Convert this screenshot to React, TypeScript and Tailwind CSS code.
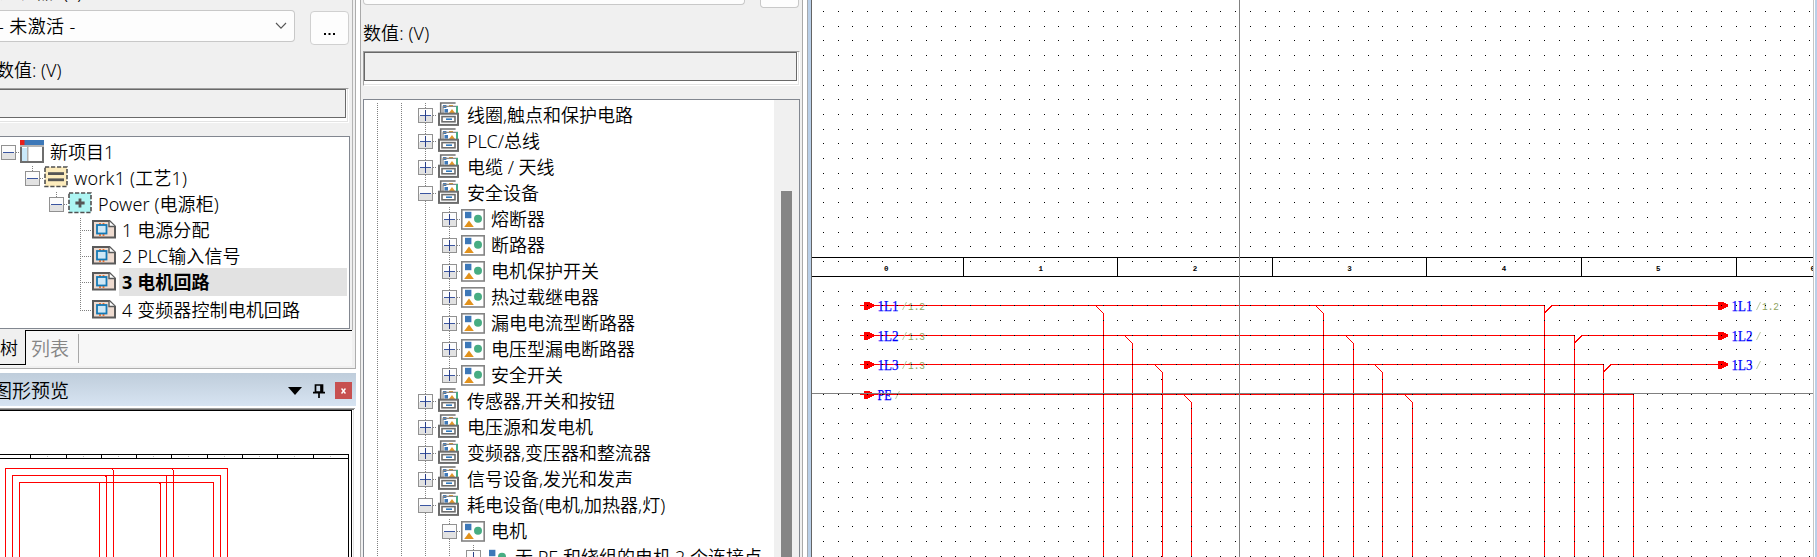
import React from "react";

const UI = "font-['Noto_Sans','Noto_Sans_CJK_SC',sans-serif]";

/* One 24px indentation cell of a tree: dotted guide lines and an optional expander */
type CellProps = { v?: "full" | "top" | "bottom" | "none"; h?: boolean; box?: "+" | "-"; height?: number };
function Cell({ v = "none", h = false, box, height = 26 }: CellProps) {
  const y1 = v === "bottom" ? 12 : 0;
  const y2 = v === "top" ? 12 : height;
  return (
    <svg width="24" height={height} className="block shrink-0 overflow-visible" shapeRendering="crispEdges">
      {v !== "none" && <path d={`M13.5 ${y1}V${y2}`} stroke="#808080" strokeDasharray="1 1" />}
      {h && <path d="M13 12.5H25" stroke="#808080" strokeDasharray="1 1" />}
      {box && (
        <g>
          <rect x="6" y="5" width="15" height="15" fill="#919191" />
          <rect x="7" y="6" width="13" height="13" fill="#fcfcfc" />
          <rect x="7" y="13" width="13" height="6" fill="#e2e2e2" />
          <path d="M8 12.5H19" stroke="#3a55a0" />
          {box === "+" && <path d="M13.5 7V18" stroke="#2a3f88" />}
        </g>
      )}
    </svg>
  );
}

function ProjectIcon() {
  return (
    <svg width="24" height="24" className="block shrink-0">
      <rect x="1" y="1" width="22" height="21" fill="#fff" stroke="#6e6e6e" strokeWidth="2" />
      <rect x="0" y="0" width="24" height="5" fill="#3d78b8" />
      <rect x="0" y="5" width="24" height="2" fill="#b5b5b5" />
      <rect x="2" y="8" width="5" height="13" fill="#c9e8fa" />
      <rect x="7" y="7" width="1.5" height="14" fill="#b0b0b0" />
      <rect x="0" y="0" width="4.5" height="5" fill="#e8201c" />
    </svg>
  );
}

function DashedIcon({ kind }: { kind: "function" | "location" }) {
  return (
    <svg width="24" height="22" className="block shrink-0">
      <rect x="1" y="1" width="22" height="19.5" fill={kind === "function" ? "#fdecbd" : "#adf5f3"} />
      <rect x="1" y="1" width="22" height="19.5" fill="none" stroke="#505050" strokeWidth="1.6" strokeDasharray="4.2 1.8" />
      {kind === "function" ? (
        <g fill="#555">
          <rect x="4" y="6.2" width="16" height="2.8" />
          <rect x="4" y="12.4" width="16" height="2.8" />
        </g>
      ) : (
        <path d="M12 6.4V15.6M7.4 11H16.6" stroke="#555" strokeWidth="2.8" />
      )}
    </svg>
  );
}

function PageIcon() {
  return (
    <svg width="24" height="19" className="block shrink-0">
      <path d="M1 1H17.5L23 6.5V17.5H1Z" fill="#eedbd0" stroke="#5a5a5a" strokeWidth="2" />
      <path d="M17 1V6.5H23" fill="#fff" stroke="#5a5a5a" strokeWidth="1.4" />
      <path d="M8 3V5M11.5 3V5M8 13.5V16M11.5 13.5V16" stroke="#f07028" strokeWidth="1.8" />
      <rect x="5" y="5" width="9.5" height="8.5" fill="#cfe8f6" stroke="#1479b5" strokeWidth="1.8" />
    </svg>
  );
}

function DrawerIcon() {
  return (
    <svg width="21" height="24" className="block shrink-0">
      <path d="M2.7 12V1H17.6" fill="none" stroke="#707070" strokeWidth="1.6" />
      <rect x="5" y="4" width="14" height="8" fill="#fff" />
      <rect x="5" y="3" width="3.4" height="3" fill="#3d78b8" />
      <rect x="11" y="3" width="4" height="2" fill="#e0982a" />
      <path d="M5 12V5M4.5 4.4H20" stroke="#888" strokeWidth="1.2" fill="none" />
      <rect x="6.5" y="7" width="3.5" height="3.6" fill="#3d78b8" />
      <path d="M11 11L14 7L17 11Z" fill="#e0982a" />
      <rect x="18" y="4" width="2" height="7" fill="#45ad84" />
      <rect x="1" y="11.7" width="19" height="11.2" fill="#fff" stroke="#6c6c6c" strokeWidth="2" />
      <rect x="4" y="14.6" width="13" height="5.2" fill="#fff" stroke="#6c6c6c" strokeWidth="1.6" />
      <rect x="8" y="16.4" width="6" height="1.6" fill="#2f7ac0" />
    </svg>
  );
}

function ShapesIcon({ frame = true }: { frame?: boolean }) {
  return (
    <svg width="24" height="21" className="block shrink-0">
      {frame && <rect x=".8" y=".8" width="22.4" height="19.2" fill="#fff" stroke="#848484" strokeWidth="1.6" />}
      <rect x="4" y="2.8" width="6.4" height="6.4" fill="#3d78b8" />
      <circle cx="17" cy="9.8" r="4" fill="#47ad83" />
      <path d="M3.2 18L8 11.6L12.8 18Z" fill="#e2921c" />
    </svg>
  );
}

type SymbolRow = { name: string; level: 1 | 2 | 3; open?: boolean };
const symbolRows: SymbolRow[] = [
  { name: "线圈,触点和保护电路", level: 1 },
  { name: "PLC/总线", level: 1 },
  { name: "电缆 / 天线", level: 1 },
  { name: "安全设备", level: 1, open: true },
  { name: "熔断器", level: 2 },
  { name: "断路器", level: 2 },
  { name: "电机保护开关", level: 2 },
  { name: "热过载继电器", level: 2 },
  { name: "漏电电流型断路器", level: 2 },
  { name: "电压型漏电断路器", level: 2 },
  { name: "安全开关", level: 2 },
  { name: "传感器,开关和按钮", level: 1 },
  { name: "电压源和发电机", level: 1 },
  { name: "变频器,变压器和整流器", level: 1 },
  { name: "信号设备,发光和发声", level: 1 },
  { name: "耗电设备(电机,加热器,灯)", level: 1, open: true },
  { name: "电机", level: 2, open: true },
  { name: "无 PE 和绕组的电机,2 个连接点", level: 3 },
];

function SymbolTreeRow({ row }: { row: SymbolRow }) {
  const box = row.open ? "-" : "+";
  return (
    <div className="flex h-[26px] shrink-0 items-start">
      <Cell v="full" />
      <Cell v="full" />
      <Cell v="full" h={row.level === 1} box={row.level === 1 ? box : undefined} />
      {row.level >= 2 && (
        <Cell v={row.name === "安全开关" ? "top" : "full"} h={row.level === 2} box={row.level === 2 ? box : undefined} />
      )}
      {row.level === 3 && <Cell v="full" h box={box} />}
      <span className={row.level === 1 ? "-mt-px ml-0.5" : "ml-px mt-0.5"}>
        {row.level === 1 ? <DrawerIcon /> : <ShapesIcon frame={row.level === 2} />}
      </span>
      <span className={`whitespace-pre leading-[24px] ${row.level === 1 ? "ml-2" : "ml-1.5"}`}>{row.name}</span>
    </div>
  );
}

function PageRow({ name, selected = false, last = false }: { name: string; selected?: boolean; last?: boolean }) {
  return (
    <div className={`flex shrink-0 items-start ${selected ? "h-7" : "h-[26px]"}`}>
      <Cell />
      <Cell />
      <Cell />
      <Cell v={last ? "top" : "full"} h height={selected ? 28 : 26} />
      <span className="ml-px mt-0.5">
        <PageIcon />
      </span>
      <span
        className={
          selected
            ? "-mt-0.5 ml-[3px] mr-0.5 h-7 flex-1 whitespace-pre bg-[#e2e2e2] pl-[3px] font-bold leading-[29px] tracking-[0.1px]"
            : "ml-1.5 whitespace-pre leading-[24px] tracking-[0.1px]"
        }
      >
        {name}
      </span>
    </div>
  );
}

function Preview() {
  const ticks = [30, 66, 101, 136, 171, 207, 242, 277, 313];
  return (
    <svg width="356" height="149" className="block shrink-0" shapeRendering="crispEdges">
      <rect width="356" height="149" fill="#fff" />
      <rect width="355" height="1" fill="#a0a0a0" />
      <rect y="1" width="354" height="1" fill="#696969" />
      <path d="M0 2.5H351.5V149M0 46.5H348.5V149M0 50.5H348" fill="none" stroke="#000" />
      <rect x="353" y="2" width="1" height="147" fill="#e3e3e3" />
      {ticks.map((x) => (
        <rect key={x} x={x} y="46" width="1" height="4" fill="#000" />
      ))}
      {ticks.map((x) => (
        <rect key={x} x={x + 17} y="48" width="1" height="1" fill="#bbb" />
      ))}
      <g fill="none" stroke="#f00">
        <path d="M5.5 149V60.5H227.5V149M12.5 149V67.5H220.5V149M19.5 149V74.5H213.5V149" />
        <path d="M112.5 60V62M113.5 62V149M172.5 60V62M173.5 62V149M105.5 67V69M106.5 68V149M166.5 68V149M99.5 75V149M159.5 74V76M160.5 75V149" />
      </g>
    </svg>
  );
}

const arrow = (x: number, y: number) => `M${x} ${y - 3.5}L${x + 4} ${y - 3.5}L${x + 10} ${y - 0.5}V${y + 1.5}L${x + 4} ${y + 4.5}H${x}Z`;
const wireYs = [305, 335, 364, 394];
const drops = [
  [1103, 1323],
  [1132, 1353],
  [1162, 1382],
  [1191, 1412],
];
const corners = [1544, 1574, 1603, 1633];
const labels = ["1L1", "1L2", "1L3"];
const sourceRefs = ["1.2", "1.3", "1.3"];
const gridXs = Array.from({ length: 68 }, (_, k) => Math.floor(823.4 + k * 14.72));
const gridYs = Array.from({ length: 38 }, (_, k) => Math.floor(11.4 + k * 14.72)).filter((y) => y !== 276);
const gridPath = gridYs.map((y) => gridXs.map((x) => `M${x} ${y}h1v1h-1z`).join("")).join("");

function WireLabel({ x, y, text, reference }: { x: number; y: number; text: string; reference?: string }) {
  const w = text.length * 7;
  return (
    <g>
      <text x={x - 0.5} y={y} fontSize="15.5" textLength={w} lengthAdjust="spacingAndGlyphs" fill="#0000ff" stroke="#0000ff" strokeWidth="0.25" className="font-['Liberation_Serif',serif]">
        {text}
      </text>
      <path d={`M${x + w + 3.5} ${y - 1}L${x + w + 7.5} ${y - 9}`} stroke="#b9c9a0" />
      {reference && (
        <text x={x + w + 9} y={y - 1} fontSize="10.5" textLength="17" lengthAdjust="spacingAndGlyphs" fill="#8da35e" className="font-['Liberation_Mono',monospace]">
          {reference}
        </text>
      )}
    </g>
  );
}

function Schematic() {
  return (
    <svg width="1001" height="557" viewBox="812 0 1001 557" className="block shrink-0 bg-white">
      <g shapeRendering="crispEdges" fill="none">
        <path d="M812 257.5H1813M812 276.5H1813" stroke="#000" />
        {[963, 1117, 1272, 1426, 1581, 1736].map((x) => (
          <path key={x} d={`M${x + 0.5} 257V277`} stroke="#000" />
        ))}
        <g stroke="#f00">
          {wireYs.map((y, i) => (
            <g key={y}>
              <path d={`M860 ${y + 0.5}H${corners[i] + 0.5}V557`} />
              {drops[i].map((x) => (
                <path key={x} d={`M${x - 7.5} ${y + 0.5}L${x + 0.5} ${y + 8.5}V557`} />
              ))}
              {i < 3 && <path d={`M${corners[i] + 0.5} ${y + 8}L${corners[i] + 8} ${y + 0.5}H1720`} />}
            </g>
          ))}
        </g>
        <g fill="#f00">
          {wireYs.map((y) => (
            <path key={y} d={arrow(864, y)} />
          ))}
          {wireYs.slice(0, 3).map((y) => (
            <path key={y} d={arrow(1718, y)} />
          ))}
        </g>
      </g>
      {[0, 1, 2, 3, 4, 5, 6].map((n) => (
        <text key={n} x={886.3 + n * 154.4} y="271" fontSize="7.5" fontWeight="bold" textAnchor="middle" className="font-['Liberation_Mono',monospace]">
          {n}
        </text>
      ))}
      {labels.map((t, i) => (
        <WireLabel key={t} x={878} y={wireYs[i] + 6} text={t} reference={sourceRefs[i]} />
      ))}
      <WireLabel x={878} y={400} text="PE" />
      {labels.map((t, i) => (
        <WireLabel key={t} x={1732} y={wireYs[i] + 6} text={t} reference={i === 0 ? "1.2" : undefined} />
      ))}
      <path d={gridPath} fill="#000" shapeRendering="crispEdges" />
      <path d="M1239.5 0V557M812 393.5H1813" stroke="#808080" shapeRendering="crispEdges" />
    </svg>
  );
}

function ValueField({ className }: { className: string }) {
  return (
    <div className={`h-[35px] shrink-0 border-b border-r border-white border-t border-t-[#a0a0a0] ${className}`}>
      <div className="h-[33px] border-b border-r border-[#e3e3e3] bg-white pb-[3px] pr-px">
        <div className="h-full border border-[#696969] bg-[#f0f0f0]" />
      </div>
    </div>
  );
}

function LeftDock() {
  return (
    <aside className="flex h-full w-[356px] shrink-0 flex-col overflow-hidden">
      <div className="flex h-[369px] shrink-0 flex-col border-b border-r border-[#adadad] bg-[#f0f0f0]">
        <div className="flex h-[330px] w-[353px] shrink-0 flex-col overflow-hidden border-r border-[#b4b4b4]">
          <div className="h-[10px] shrink-0">
            <div className="-mt-[20px] whitespace-pre leading-6">过滤器: (F)</div>
          </div>
          <div className="flex h-[35px] shrink-0 items-start">
            <div className="flex h-8 w-[295px] items-center justify-between rounded-r-sm border border-l-0 border-[#c8c8c8] bg-[#fdfdfd] pr-[7px]">
              <span className="-ml-0.5 whitespace-pre tracking-[0.4px]">- 未激活 -</span>
              <svg width="12" height="8">
                <path d="M1 1L6 6.2L11 1" fill="none" stroke="#555" strokeWidth="1.1" />
              </svg>
            </div>
            <div className="ml-[15px] mt-px flex h-[34px] w-[39px] items-center justify-center rounded border border-[#d0d0d0] bg-[#fdfdfd]">
              <svg width="11" height="2" className="mt-[11px]">
                <path d="M0 0h2v2H0zM4.5 0h2v2h-2zM9 0h2v2H9z" />
              </svg>
            </div>
          </div>
          <div className="flex h-[43px] shrink-0 items-center pt-2">
            <span className="-ml-1 whitespace-pre">数值: (V)</span>
          </div>
          <ValueField className="-ml-1 mr-[3px]" />
          <div className="mr-0.5 mt-[13px] flex h-[193px] shrink-0 flex-col overflow-hidden border-b border-r border-t border-[#828790] bg-white pt-[3px]">
            <div className="-ml-[5px] flex flex-col">
              <div className="flex h-[26px] items-start">
                <Cell h box="-" />
                <span className="ml-px">
                  <ProjectIcon />
                </span>
                <span className="ml-1.5 leading-[24px]">新项目1</span>
              </div>
              <div className="flex h-[26px] items-start">
                <Cell />
                <Cell v="top" h box="-" />
                <span className="ml-px">
                  <DashedIcon kind="function" />
                </span>
                <span className="ml-1.5 whitespace-pre leading-[24px] tracking-[0.2px]">work1 (工艺1)</span>
              </div>
              <div className="flex h-[26px] items-start">
                <Cell />
                <Cell />
                <Cell v="top" h box="-" />
                <span className="ml-px">
                  <DashedIcon kind="location" />
                </span>
                <span className="ml-1.5 whitespace-pre leading-[24px] tracking-[0.1px]">Power (电源柜)</span>
              </div>
              <PageRow name="1 电源分配" />
              <PageRow name="2 PLC输入信号" />
              <PageRow name="3 电机回路" selected />
              <PageRow name="4 变频器控制电机回路" last />
            </div>
          </div>
        </div>
        <div className="flex h-9 w-[352px] shrink-0 bg-[#f7f7f7]">
          <div className="flex h-[35px] w-[26px] items-center border-b border-r border-black bg-[#f0f0f0] pt-0.5">
            <span>树</span>
          </div>
          <div className="flex h-full flex-1 border-t border-black">
            <div className="my-[3px] flex w-[53px] items-center border-r border-[#a8a8a8] pl-[5px] pt-px text-[19px] text-[#858585]">列表</div>
          </div>
        </div>
      </div>
      <div className="mt-1 flex h-[33px] shrink-0 items-center bg-linear-to-b from-[#bfcddb] to-[#d7e4f2] pr-1 pt-0.5">
        <span className="-ml-[7px] flex-1 whitespace-nowrap text-[19px] leading-6">图形预览</span>
        <svg width="14" height="8" className="mr-[11px]">
          <path d="M0 0H14L7 8Z" />
        </svg>
        <svg width="12" height="14" className="mr-[10px]">
          <path d="M2.5 1H9.5V8H2.5ZM8 1V8M0 8.7H12M6 9V14" fill="none" stroke="#000" strokeWidth="1.7" />
        </svg>
        <div className="flex size-[17px] items-center justify-center bg-[#c75050] text-white">
          <svg width="5" height="6">
            <path d="M.5 .5L4.5 5.5M4.5 .5L.5 5.5" stroke="#fff" strokeWidth="1.5" />
          </svg>
        </div>
      </div>
      <div className="mt-0.5">
        <Preview />
      </div>
    </aside>
  );
}

function SymbolDock() {
  return (
    <section className="ml-1 flex h-full w-[443px] shrink-0 flex-col overflow-hidden border-x border-[#a9a9a9] bg-[#f0f0f0] pl-0.5 pr-0.5">
      <div className="flex h-2 shrink-0 items-start">
        <div className="h-[5px] w-[382px] rounded-b-sm border border-t-0 border-[#c8c8c8] bg-[#fdfdfd]" />
        <div className="ml-[15px] h-2 w-[39px] rounded-b border border-t-0 border-[#c8c8c8] bg-[#fdfdfd]" />
      </div>
      <div className="flex h-[43px] shrink-0 items-center pt-2">
        <span className="whitespace-pre tracking-[0.1px]">数值: (V)</span>
      </div>
      <ValueField className="border-l border-l-[#a0a0a0]" />
      <div className="mt-[13px] flex min-h-0 flex-1 border-x border-t border-[#828790] bg-white">
        <div className="flex min-w-0 flex-1 flex-col overflow-hidden pt-[3px]">
          {symbolRows.map((r) => (
            <SymbolTreeRow key={r.name} row={r} />
          ))}
        </div>
        <div className="flex w-[25px] shrink-0 flex-col items-center bg-[#f0f0f0] pt-[91px]">
          <div className="w-[11px] flex-1 bg-[#858585]" />
        </div>
      </div>
    </section>
  );
}

export default function App() {
  return (
    <div className={`flex h-[557px] w-[1817px] overflow-hidden bg-white text-[18px] font-[350] text-black ${UI}`}>
      <LeftDock />
      <SymbolDock />
      <main className="ml-1 flex h-full w-[1010px] border-l border-[#a5a9ae] bg-[#b9cfe8]">
        <div className="ml-[3px] flex h-full w-[1004px] border-l border-[#646464] bg-white">
          <Schematic />
          <div className="w-px bg-[#c4c4c4]" />
        </div>
      </main>
    </div>
  );
}
